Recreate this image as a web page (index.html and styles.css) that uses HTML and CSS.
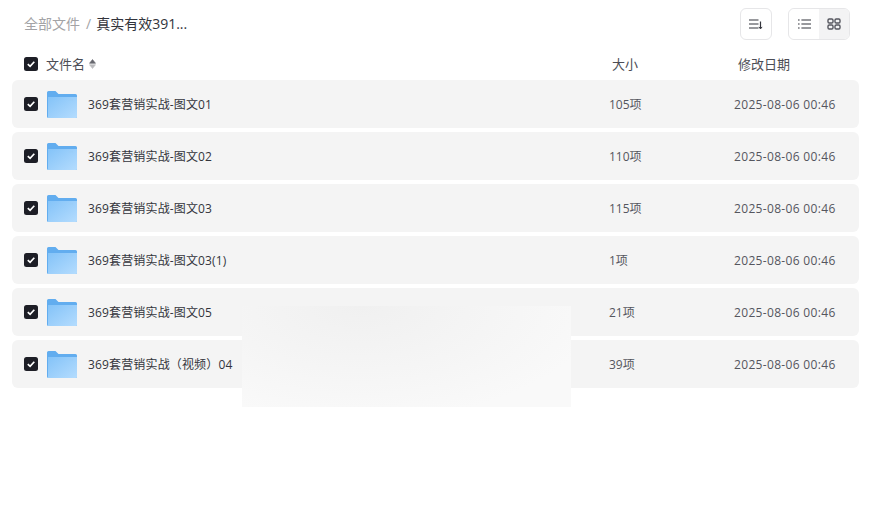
FILE: index.html
```html
<!DOCTYPE html>
<html lang="zh-CN">
<head>
    <meta charset="UTF-8">
    <title>全部文件</title>
    <link rel="stylesheet" href="styles.css">
</head>
<body>
    <svg class="defs" width="0" height="0">
        <defs>
            <linearGradient id="folderFront" x1="0" y1="0" x2="1" y2="1">
                <stop offset="0" stop-color="#84c3f8"/>
                <stop offset="1" stop-color="#b4dcfe"/>
            </linearGradient>
            <symbol id="folder" viewBox="0 0 30 27">
                <path d="M0 1.5A1.5 1.5 0 0 1 1.5 0h7l3 3h17a1.5 1.5 0 0 1 1.5 1.5v21a1.5 1.5 0 0 1-1.5 1.5h-27A1.5 1.5 0 0 1 0 25.5z" fill="#62adef"/>
                <path d="M1 6h29v19.5a1.5 1.5 0 0 1-1.5 1.5H1z" fill="url(#folderFront)"/>
                <rect x="22" y="8" width="4" height="1.5" fill="#9acdf8"/>
            </symbol>
            <symbol id="check" viewBox="0 0 14 14">
                <rect width="14" height="14" rx="2.5" fill="#1d1e26"/>
                <path d="M3.8 7.2l2.3 2.2 4.2-4.6" fill="none" stroke="#fff" stroke-width="1.7"/>
            </symbol>
        </defs>
    </svg>

    <div class="page">
        <!-- 顶部:面包屑 + 按钮 -->
        <div class="topbar">
            <div class="crumbs">
                <span class="crumb-root">全部文件</span>
                <span class="crumb-sep">/</span>
                <span class="crumb-current">真实有效391...</span>
            </div>
            <div class="tools">
                <button class="tool-btn" type="button">
                    <svg width="14" height="12" viewBox="0 0 14 12" fill="none" stroke="#33343c" stroke-width="1.2">
                        <path d="M0 2h9.5M0 6h9.5M0 10h9.5M11.5 3.5v7"/>
                        <path d="M9.9 8.9l1.6 2 1.6-2" stroke-width="1"/>
                    </svg>
                </button>
                <div class="view-switch">
                    <button class="view-btn" type="button">
                        <svg width="13" height="10" viewBox="0 0 13 10" fill="none" stroke="#33343c" stroke-width="1.2">
                            <path d="M0 1h1.6M3.4 1H13M0 5h1.6M3.4 5H13M0 9h1.6M3.4 9H13"/>
                        </svg>
                    </button>
                    <button class="view-btn view-btn-on" type="button">
                        <svg width="14" height="12" viewBox="0 0 14 12" fill="none" stroke="#55565e" stroke-width="1.4">
                            <rect x="1" y="1" width="5" height="4" rx="1.2"/>
                            <rect x="8" y="1" width="5" height="4" rx="1.2"/>
                            <rect x="1" y="7" width="5" height="4" rx="1.2"/>
                            <rect x="8" y="7" width="5" height="4" rx="1.2"/>
                        </svg>
                    </button>
                </div>
            </div>
        </div>

        <!-- 表头 -->
        <div class="head-row">
            <svg class="check" width="14" height="14"><use href="#check"/></svg>
            <span class="head-name">文件名</span>
            <svg class="sort-mark" width="7" height="10" viewBox="0 0 7 10">
                <path d="M3.5 0.5L6.5 4.3H0.5z" fill="#66676e" stroke="#66676e" stroke-width="0.6" stroke-linejoin="round"/>
                <path d="M3.5 9.5L0.5 5.7h6z" fill="#bbbbbe" stroke="#bbbbbe" stroke-width="0.6" stroke-linejoin="round"/>
            </svg>
            <span class="head-size">大小</span>
            <span class="head-date">修改日期</span>
        </div>

        <!-- 文件列表 -->
        <div class="list">
            <div class="row">
                <svg class="check" width="14" height="14"><use href="#check"/></svg>
                <svg class="folder" width="30" height="27"><use href="#folder"/></svg>
                <span class="name">369套营销实战-图文01</span>
                <span class="size">105项</span>
                <span class="date">2025-08-06 00:46</span>
            </div>
            <div class="row">
                <svg class="check" width="14" height="14"><use href="#check"/></svg>
                <svg class="folder" width="30" height="27"><use href="#folder"/></svg>
                <span class="name">369套营销实战-图文02</span>
                <span class="size">110项</span>
                <span class="date">2025-08-06 00:46</span>
            </div>
            <div class="row">
                <svg class="check" width="14" height="14"><use href="#check"/></svg>
                <svg class="folder" width="30" height="27"><use href="#folder"/></svg>
                <span class="name">369套营销实战-图文03</span>
                <span class="size">115项</span>
                <span class="date">2025-08-06 00:46</span>
            </div>
            <div class="row">
                <svg class="check" width="14" height="14"><use href="#check"/></svg>
                <svg class="folder" width="30" height="27"><use href="#folder"/></svg>
                <span class="name">369套营销实战-图文03(1)</span>
                <span class="size">1项</span>
                <span class="date">2025-08-06 00:46</span>
            </div>
            <div class="row">
                <svg class="check" width="14" height="14"><use href="#check"/></svg>
                <svg class="folder" width="30" height="27"><use href="#folder"/></svg>
                <span class="name">369套营销实战-图文05</span>
                <span class="size">21项</span>
                <span class="date">2025-08-06 00:46</span>
            </div>
            <div class="row">
                <svg class="check" width="14" height="14"><use href="#check"/></svg>
                <svg class="folder" width="30" height="27"><use href="#folder"/></svg>
                <span class="name">369套营销实战（视频）04</span>
                <span class="size">39项</span>
                <span class="date">2025-08-06 00:46</span>
            </div>
        </div>

        <!-- 遮挡块 -->
        <div class="blur-patch"></div>
    </div>
</body>
</html>
```

FILE: styles.css
```css
/* 页面 */
body {
    margin: 0;
    background-color: #fff;
    color: #33343c;
    font-family: "Open Sans", "Noto Sans CJK SC", sans-serif;
    font-size: 12px;
}

.defs {
    display: block;
    height: 0;
}

.page {
    position: relative;
    width: 874px;
    height: 514px;
    overflow: hidden;
}

/* 顶部 */
.topbar {
    display: flex;
    justify-content: space-between;
    align-items: center;
    height: 32px;
    padding: 8px 24px 0 24px;
}

.crumbs {
    display: flex;
    align-items: center;
    font-size: 14px;
    margin-bottom: 2px;
}

.crumb-root {
    color: #a3a3a6;
}

.crumb-sep {
    margin: 0 5px 0 6px;
    color: #a3a3a6;
}

.crumb-current {
    color: #33343c;
}

.tools {
    display: flex;
    gap: 16px;
}

.tool-btn {
    display: flex;
    align-items: center;
    justify-content: center;
    width: 32px;
    height: 32px;
    padding: 0;
    background: #fff;
    border: 1px solid #e6e6e8;
    border-radius: 6px;
}

.view-switch {
    display: flex;
    box-sizing: border-box;
    width: 62px;
    height: 32px;
    overflow: hidden;
    background: #fff;
    border: 1px solid #e6e6e8;
    border-radius: 6px;
}

.view-btn {
    display: flex;
    align-items: center;
    justify-content: center;
    width: 30px;
    padding: 0;
    background: #fff;
    border: none;
    border-radius: 6px;
}

.view-btn-on {
    background: #f3f3f4;
    border-radius: 0;
}

/* 表头 */
.head-row {
    display: flex;
    align-items: center;
    height: 20px;
    margin-top: 14px;
    padding-left: 24px;
    font-size: 13px;
    color: #4c4d55;
}

.head-row span {
    margin-bottom: 2px;
}

.head-name {
    margin-left: 8px;
}

.sort-mark {
    margin-left: 4px;
}

.head-size {
    margin-left: 516px;
    width: 126px;
}

/* 列表 */
.list {
    display: flex;
    flex-direction: column;
    gap: 4px;
    margin: 6px 15px 0 12px;
}

.row {
    display: flex;
    align-items: center;
    height: 48px;
    padding-left: 12px;
    background: #f4f4f4;
    border-radius: 6px;
}

.check {
    flex: none;
}

.folder {
    flex: none;
    margin-left: 9px;
}

.name {
    width: 521px;
    margin-left: 11px;
    letter-spacing: 0.15px;
}

.size {
    width: 125px;
    color: #55565e;
}

.date {
    color: #55565e;
    letter-spacing: 0.33px;
}

/* 遮挡块,压在列表上面 */
.blur-patch {
    position: absolute;
    left: 242px;
    top: 306px;
    width: 329px;
    height: 101px;
    background: radial-gradient(ellipse at 36% 0%, #f0f0f0 0%, #f5f5f5 45%, #f9f9f9 80%);
}
```
